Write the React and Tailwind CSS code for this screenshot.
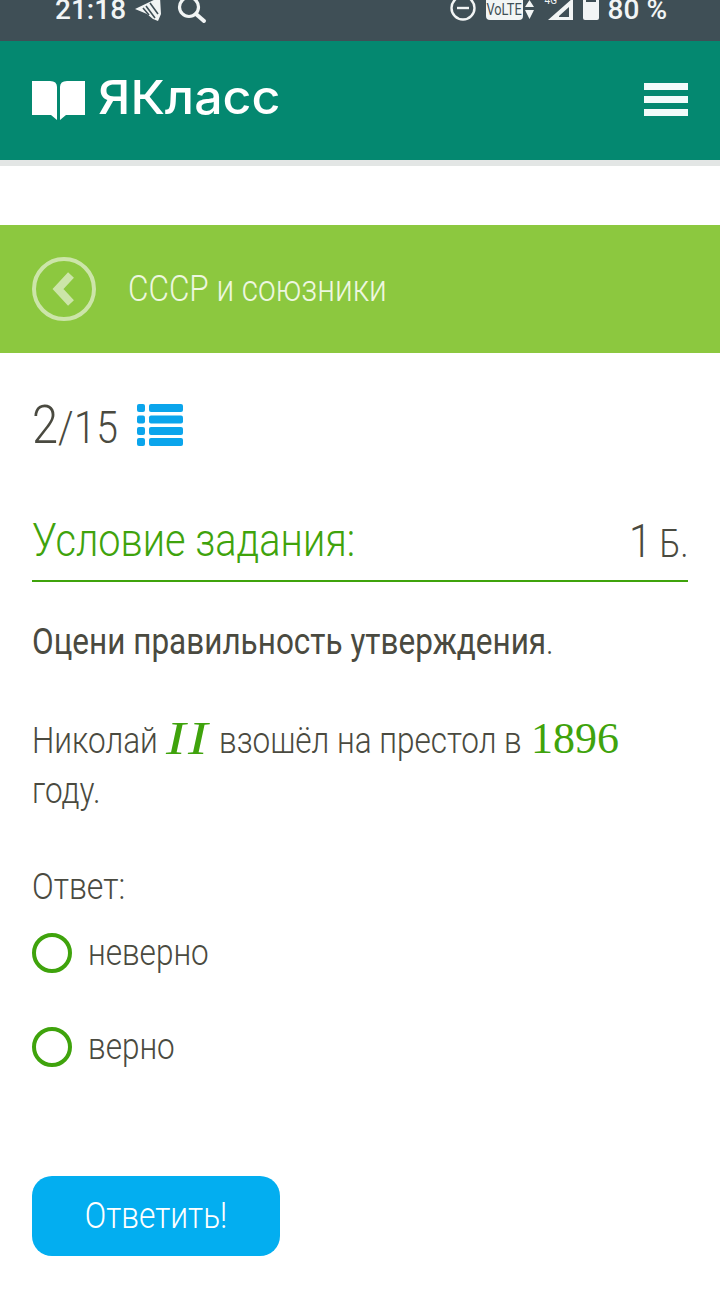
import React from "react";

// Status bar icons
function StatusLeft() {
  return (
    <div className="flex items-start">
      <span className="mt-[-8px] text-[28px] leading-[36px] font-medium text-[#f2f5f5] whitespace-nowrap">21:18</span>
      <svg className="ml-[9px] overflow-visible" width="26" height="22" viewBox="0 0 26 22">
        <path d="M0 9 L25 -3 L26 14 L23 21 L18 19 L12 14 Z" fill="#f2f5f5" />
        <path d="M11 6 L20 18 M8 8 L14 15 M15 3 L23 14" stroke="#3f4f56" strokeWidth="1.6" />
      </svg>
      <svg className="ml-[17px] overflow-visible" width="28" height="24" viewBox="0 0 28 24">
        <circle cx="11" cy="7" r="9.5" fill="none" stroke="#f2f5f5" strokeWidth="3.2" />
        <path d="M18 14 L26 21" stroke="#f2f5f5" strokeWidth="4" strokeLinecap="round" />
      </svg>
    </div>
  );
}

function StatusRight() {
  return (
    <div className="flex items-start">
      <svg className="overflow-visible" width="26" height="21" viewBox="0 0 26 21">
        <circle cx="13" cy="8" r="11.5" fill="none" stroke="#f2f5f5" strokeWidth="2.4" />
        <path d="M7 8 H19" stroke="#f2f5f5" strokeWidth="2.4" />
      </svg>
      <div className="ml-[10px] w-[37px] h-[20px] bg-[#f2f5f5] rounded-b-[4px] flex items-center justify-center text-[#3f4f56] overflow-hidden">
        <span className="text-[16px] leading-none scale-x-[0.8] whitespace-nowrap">VoLTE</span>
      </div>
      <svg className="ml-[2px]" width="9" height="19" viewBox="0 0 9 19">
        <path d="M4.5 0 L9 7 H0 Z M0 10 H9 L4.5 19 Z" fill="#f2f5f5" />
      </svg>
      <div className="relative ml-[14px] w-[25px] h-[21px]">
        <svg className="overflow-visible" width="25" height="21" viewBox="0 0 25 21">
          <path d="M0 20 L25 -2 V20 Z M21 7 L11 16 V17 H21 Z" fill="#f2f5f5" fillRule="evenodd" />
        </svg>
        <span className="absolute left-[-3px] top-[-4px] text-[10px] leading-none text-[#f2f5f5]">4G</span>
      </div>
      <svg className="ml-[10px] overflow-visible" width="16" height="20" viewBox="0 0 16 20">
        <rect x="0" y="-2" width="16" height="22" rx="2" fill="#f2f5f5" />
        <rect x="3" y="-2" width="10" height="4" fill="#3f4f56" />
      </svg>
      <span className="mt-[-8px] ml-[9px] text-[28px] leading-[36px] font-medium text-[#f2f5f5] whitespace-nowrap">80 %</span>
    </div>
  );
}

function RadioOption({ label }) {
  return (
    <label className="flex items-center h-[40px]">
      <span className="w-[40px] h-[40px] rounded-full border-[4px] border-[#3fa30c] bg-white" />
      <span className="ml-[16px] text-[36px] font-light leading-none text-[#4a4a40] scale-x-[0.875] origin-left">{label}</span>
    </label>
  );
}

// Square-bullet list icon next to the counter
function ListIcon() {
  return (
    <svg width="46" height="42" viewBox="0 0 46 42" fill="#0ba5ec">
      <rect x="0" y="0" width="8" height="8" rx="2" />
      <rect x="12" y="0" width="34" height="8" rx="2" />
      <rect x="0" y="11.5" width="8" height="8" rx="2" />
      <rect x="12" y="11.5" width="34" height="8" rx="2" />
      <rect x="0" y="23" width="8" height="8" rx="2" />
      <rect x="12" y="23" width="34" height="8" rx="2" />
      <rect x="0" y="34" width="8" height="8" rx="2" />
      <rect x="12" y="34" width="34" height="8" rx="2" />
    </svg>
  );
}

export default function App() {
  return (
    <div className="w-[720px] h-[1304px] overflow-hidden bg-white font-['Roboto',sans-serif]">
      {/* status bar */}
      <div className="h-[41px] bg-[#3f4f56] pl-[55px] pr-[53px] flex items-start justify-between overflow-hidden">
        <StatusLeft />
        <StatusRight />
      </div>

      {/* header */}
      <div className="h-[119px] bg-[#048870] px-[32px] flex items-center justify-between">
        <div className="flex items-center">
          <svg width="53" height="40" viewBox="0 0 53 40">
            <path d="M0 0 H18 Q25 0 25 6 V39 L19 34 H0 Z M28 6 Q28 0 35 0 H53 V34 H34 L28 39 Z" fill="#fff" />
          </svg>
          <span className="ml-[13px] mt-[-9px] text-[47px] leading-none font-medium text-white font-['Inter',sans-serif] scale-x-[1.065] origin-left whitespace-nowrap">ЯКласс</span>
        </div>
        <div className="w-[44px] mt-[-3px] flex flex-col gap-[6px]">
          <div className="h-[7px] bg-[#f2fbfa]" />
          <div className="h-[7px] bg-[#f2fbfa]" />
          <div className="h-[7px] bg-[#f2fbfa]" />
        </div>
      </div>
      <div className="h-[6px] bg-[#e3e6e5]" />

      {/* topic banner */}
      <div className="mt-[59px] h-[128px] bg-[#8cc83f] pl-[32px] flex items-center">
        <div className="w-[64px] h-[64px] rounded-full border-[4px] border-[#cce5a9] flex items-center justify-center">
          <svg width="26" height="34" viewBox="0 0 26 34">
            <path d="M20 3 L7 17 L20 31" fill="none" stroke="#cce5a9" strokeWidth="8" />
          </svg>
        </div>
        <span className="ml-[32px] text-[36px] font-light leading-none text-[#eef7e0] scale-x-[0.875] origin-left whitespace-nowrap">СССР и союзники</span>
      </div>

      <div className="px-[32px]">
        {/* counter */}
        <div className="mt-[40px] h-[64px] flex items-center">
          <div className="text-[#4a4a40] font-light leading-none scale-x-[0.87] origin-left w-[105px] whitespace-nowrap">
            <span className="text-[54px]">2</span>
            <span className="text-[45px] tracking-[0.5px]">/15</span>
          </div>
          <ListIcon />
        </div>

        {/* task heading */}
        <div className="mt-[43px] h-[82px] border-b-2 border-[#3fa30c] flex items-center justify-between">
          <span className="text-[46px] font-light leading-none text-[#3fa30c] scale-x-[0.862] origin-left whitespace-nowrap">Условие задания:</span>
          <div className="text-[#4a4a40] font-light leading-none scale-x-[0.87] origin-right whitespace-nowrap">
            <span className="text-[47px]">1</span>
            <span className="text-[38px]"> Б.</span>
          </div>
        </div>

        <p className="mt-[36px] text-[36px] leading-[48px] text-[#4a4a40] scale-x-[0.875] origin-left whitespace-nowrap">
          <span className="font-[450]">Оцени правильность утверждения</span><span className="font-light">.</span>
        </p>

        <div className="mt-[50px] font-light text-[#4a4a40] text-[36px]">
          <div className="h-[50px] flex items-center whitespace-nowrap">
            <span className="w-[134px] scale-x-[0.875] origin-left">Николай</span>
            <span className="w-[53px] mt-[-5px] font-['Liberation_Serif',serif] font-normal italic text-[#3fa30c] text-[47px] leading-none tracking-[2px] scale-x-[1.25] origin-left">II</span>
            <span className="w-[312px] scale-x-[0.875] origin-left">взошёл на престол в</span>
            <span className="mt-[-5px] font-['Liberation_Serif',serif] font-normal text-[#3fa30c] text-[44px] leading-none">1896</span>
          </div>
          <div className="h-[50px] flex items-center scale-x-[0.875] origin-left">году.</div>
        </div>

        <div className="mt-[46px] h-[50px] flex items-center text-[36px] font-light text-[#4a4a40] scale-x-[0.89] origin-left">Ответ:</div>

        <div className="mt-[21px] flex flex-col gap-[54px]">
          <RadioOption label="неверно" />
          <RadioOption label="верно" />
        </div>

        <div className="mt-[109px] w-[248px] h-[80px] rounded-[20px] bg-[#03aef0] flex items-center justify-center">
          <span className="text-[36px] font-light leading-none text-white scale-x-[0.88]">Ответить!</span>
        </div>
      </div>
    </div>
  );
}
